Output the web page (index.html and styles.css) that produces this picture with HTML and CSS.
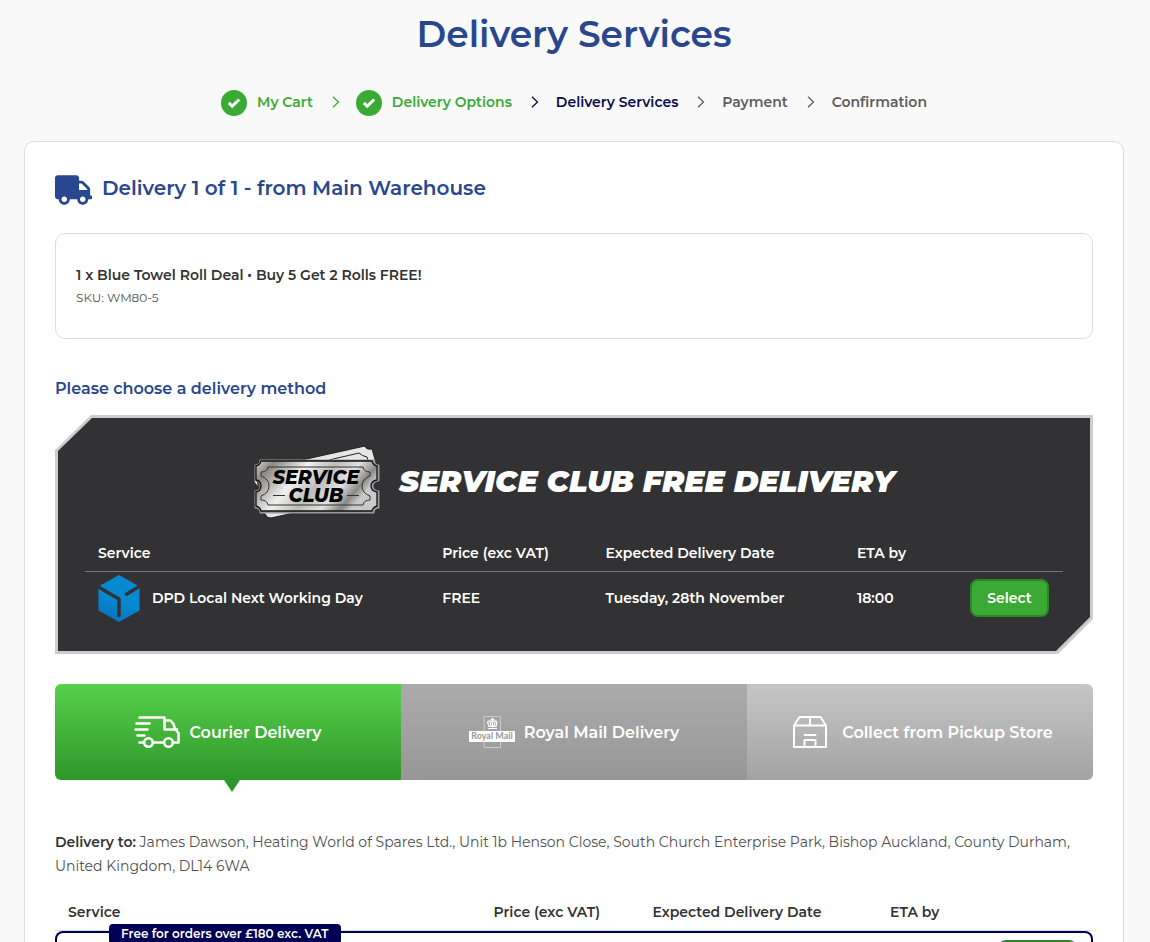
FILE: index.html
```html
<!DOCTYPE html>
<html lang="en">

<head>
    <meta charset="utf-8">
    <meta name="viewport" content="width=device-width, initial-scale=1.0">
    <title>Delivery Services</title>
    <link rel="stylesheet" href="styles.css">
</head>

<body>
<div class="page">
    <h1>Delivery Services</h1>

    <ol class="steps">
        <li class="done">
            <a href="#">
                <svg class="tick" viewBox="0 0 26 26"><circle cx="13" cy="13" r="13"/><path d="M7.8 12.8l3.4 3.3 7-6.6"/></svg>
                My Cart
            </a>
            <svg class="arrow" viewBox="0 0 8 12"><path d="M1 .7l5.5 5.3L1 11.3"/></svg>
        </li>
        <li class="done">
            <a href="#">
                <svg class="tick" viewBox="0 0 26 26"><circle cx="13" cy="13" r="13"/><path d="M7.8 12.8l3.4 3.3 7-6.6"/></svg>
                Delivery Options
            </a>
        </li>
        <li class="current">
            <svg class="arrow" viewBox="0 0 8 12"><path d="M1 .7l5.5 5.3L1 11.3"/></svg>
            Delivery Services
        </li>
        <li>
            <svg class="arrow" viewBox="0 0 8 12"><path d="M1 .7l5.5 5.3L1 11.3"/></svg>
            Payment
        </li>
        <li>
            <svg class="arrow" viewBox="0 0 8 12"><path d="M1 .7l5.5 5.3L1 11.3"/></svg>
            Confirmation
        </li>
    </ol>

    <div class="card">
        <h2>
            <svg class="truck" viewBox="0 0 640 512"><path d="M624 352h-16V243.9c0-12.7-5.1-24.9-14.1-33.9L494 110.1c-9-9-21.2-14.1-33.9-14.1H416V48c0-26.5-21.5-48-48-48H48C21.5 0 0 21.5 0 48v320c0 26.5 21.5 48 48 48h16c0 53 43 96 96 96s96-43 96-96h128c0 53 43 96 96 96s96-43 96-96h48c8.8 0 16-7.2 16-16v-32c0-8.8-7.2-16-16-16zM160 464c-26.5 0-48-21.5-48-48s21.5-48 48-48 48 21.5 48 48-21.5 48-48 48zm320 0c-26.5 0-48-21.5-48-48s21.5-48 48-48 48 21.5 48 48-21.5 48-48 48zm80-208H416V144h44.1l99.9 99.9V256z"/></svg>
            <span>Delivery 1 of 1 - from Main Warehouse</span>
        </h2>

        <div class="item">
            <div class="item-name">1 x Blue Towel Roll Deal • Buy 5 Get 2 Rolls FREE!</div>
            <div class="item-sku">SKU: WM80-5</div>
        </div>

        <h3>Please choose a delivery method</h3>

        <div class="club">
            <div class="club-inner">
                <div class="club-title">
                    <svg class="ticket" viewBox="0 0 128 74">
                        <defs>
                            <linearGradient id="silver" x1="0" y1="0" x2="1" y2=".35">
                                <stop offset="0" stop-color="#d2d2d2"/>
                                <stop offset=".14" stop-color="#8b8986"/>
                                <stop offset=".4" stop-color="#f0f0f0"/>
                                <stop offset=".6" stop-color="#bdbcb9"/>
                                <stop offset=".78" stop-color="#e2e2e2"/>
                                <stop offset=".92" stop-color="#8a8884"/>
                                <stop offset="1" stop-color="#c9c9c9"/>
                            </linearGradient>
                        </defs>
                        <g class="ticket-back">
                            <path d="M40 17L112 1q1 4 7 3l4 14-2 5H40z"/>
                            <path d="M76 15L106 8q3 3 8 4l2 7"/>
                            <path d="M4 56l3 11q5 0 7 5l4 1 36-8z"/>
                            <path d="M2 29l-1 8 4 5"/>
                        </g>
                        <path class="ticket-edge" d="M8 16H120q0 4 5 5V35q-6 1-6 6t6 6V62q-5 1-5 5H8q0-4-5-5V47q5-1 5-6t-5-6V21q5-1 5-5z"/>
                        <path class="ticket-front" fill="url(#silver)" d="M8 16H119q1 4 5 5V35q-6 1-6 6t6 6V61q-4 1-5 5H8q-1-4-5-5V47q5-1 5-6t-5-6V21q4-1 5-5z"/>
                        <path class="ticket-line" d="M15 22H110q1 5 7 5v4q-8 3-8 10t8 10v4q-6 0-7 5H15q-1-5-7-5v-4q8-3 8-10t-8-10v-4q6 0 7-5zM20 50.5H32M94 50.5H106"/>
                        <text x="63" y="39">SERVICE</text>
                        <text x="63" y="57">CLUB</text>
                    </svg>
                    <span>SERVICE CLUB FREE DELIVERY</span>
                </div>
                <table class="services">
                    <colgroup>
                        <col class="c-service"><col class="c-price"><col class="c-date"><col class="c-eta"><col>
                    </colgroup>
                    <thead>
                        <tr>
                            <th>Service</th>
                            <th>Price (exc VAT)</th>
                            <th>Expected Delivery Date</th>
                            <th>ETA by</th>
                            <th></th>
                        </tr>
                    </thead>
                    <tbody>
                        <tr>
                            <td>
                                <div class="carrier">
                                    <svg class="dpd" viewBox="0 0 42 48">
                                        <defs>
                                            <linearGradient id="dpdblue" x1=".6" y1="0" x2=".3" y2="1">
                                                <stop offset=".5" stop-color="#058ad2"/>
                                                <stop offset="1" stop-color="#0872b8"/>
                                            </linearGradient>
                                        </defs>
                                        <path fill="url(#dpdblue)" d="M21 1L41.5 12.500v24L21 48 .5 36.500V12.500z"/>
                                        <path class="dpd-line" d="M0 12.800L21 24.900V41.500M42 12L28.500 20.200"/>
                                    </svg>
                                    DPD Local Next Working Day
                                </div>
                            </td>
                            <td>FREE</td>
                            <td>Tuesday, 28th November</td>
                            <td>18:00</td>
                            <td class="action"><button type="button" class="select">Select</button></td>
                        </tr>
                    </tbody>
                </table>
            </div>
        </div>

        <div class="tabs">
            <button type="button" class="tab active">
                <svg class="tab-icon" viewBox="0 0 46 32">
                    <path d="M5.5 1.5H30.5V13.5H43M30.5 4.5H36.5L39.5 8 41 13 44.5 17V26.5H40M5.5 26.5H8.5M20 26.5H29M2.5 7.5H15.5M1.5 13.5H13.5M3.5 19.5H10.5"/>
                    <circle cx="14.5" cy="26.5" r="4.3"/><circle cx="34.5" cy="26.5" r="4.3"/>
                </svg>
                Courier Delivery
            </button>
            <button type="button" class="tab">
                <svg class="tab-icon" viewBox="0 0 46 32">
                    <path class="royal-frame" d="M15.5.5H31.5V31.5H15.5z"/>
                    <path class="royal-crown" d="M19.5 12.5h8M20 10.5L18.5 6q2-2.5 4.5 0 3-2.5 5 0l-1 4.500zM23.500 2v9M22 3.500h3M21 6l1 4M26 6l-1 4"/>
                    <path class="royal-plate" d="M0 15H46V26H0z"/>
                    <text x="23" y="23">Royal Mail</text>
                </svg>
                Royal Mail Delivery
            </button>
            <button type="button" class="tab light">
                <svg class="tab-icon store" viewBox="-6 0 46 32">
                    <path d="M1 9.5L6.5 1H27.5L33 9.5V31H1zM1 9.5H33M17 1V9.5M11.5 31V24H22.5V31M11.5 19H22.5"/>
                </svg>
                Collect from Pickup Store
            </button>
        </div>

        <p class="address"><b>Delivery to:</b> James Dawson, Heating World of Spares Ltd., Unit 1b Henson Close, South Church Enterprise Park, Bishop Auckland, County Durham, United Kingdom, DL14 6WA</p>

        <table class="services courier">
            <colgroup>
                <col class="c-service"><col class="c-price"><col class="c-date"><col class="c-eta"><col>
            </colgroup>
            <thead>
                <tr>
                    <th>Service</th>
                    <th>Price (exc VAT)</th>
                    <th>Expected Delivery Date</th>
                    <th>ETA by</th>
                    <th></th>
                </tr>
            </thead>
            <tbody>
                <tr>
                    <td colspan="4"><span class="badge">Free for orders over £180 exc. VAT</span></td>
                    <td class="action"><button type="button" class="select">Select</button></td>
                </tr>
            </tbody>
        </table>
    </div>
</div>
</body>
</html>
```
FILE: styles.css
```css
* {
    box-sizing: border-box;
}
body {
    margin: 0;
    font-family: Montserrat, Inter, sans-serif;
    font-size: 14px;
    color: #333;
    background: #f9f9f9;
}
.page {
    height: 100vh;
    overflow: hidden;
    padding: 12px 26px 0 24px;
}
h1, h2, h3, p, ol {
    margin: 0;
    padding: 0;
    font-weight: 600;
}
h1 {
    font-size: 36px;
    line-height: 44px;
    text-align: center;
    color: #29478e;
}

/* progress */
.steps {
    display: flex;
    justify-content: center;
    gap: 19px;
    margin: 34px 0 25px;
    list-style: none;
    font-weight: 600;
    line-height: 24px;
    color: #5c5c5c;
}
.steps li,
.steps a {
    display: flex;
    align-items: flex-start;
    gap: 17px;
    height: 26px;
}
.steps li.done {
    gap: 19px;
}
.steps li.done:first-child {
    margin-right: -3px;
}
.steps a {
    gap: 10px;
    color: inherit;
    text-decoration: none;
}
.steps .done {
    color: #3aaa35;
}
.steps .current {
    color: #0b0b4f;
}
.tick {
    width: 26px;
    height: 26px;
    fill: #3aaa35;
}
.tick path {
    fill: none;
    stroke: #fff;
    stroke-width: 3;
}
.arrow {
    width: 8px;
    height: 12px;
    margin-top: 6px;
    fill: none;
    stroke: currentColor;
    stroke-width: 1.3;
}

.card {
    padding: 32px 30px;
    border: 1px solid #ddd;
    border-radius: 10px;
    background: #fff;
}
h2 {
    display: flex;
    align-items: flex-start;
    gap: 10px;
    font-size: 20px;
    line-height: 28px;
    color: #29478e;
}
.truck {
    width: 37px;
    height: 30px;
    margin-top: 1px;
    fill: #29478e;
}
.item {
    margin-top: 28px;
    padding: 29px 20px;
    border: 1px solid #ddd;
    border-radius: 10px;
}
.item-name {
    font-weight: 600;
    line-height: 24px;
}
.item-sku {
    font-size: 12px;
    line-height: 22px;
    color: #505050;
}
h3 {
    margin: 38px 0 14px;
    font-size: 16px;
    line-height: 24px;
    color: #29478e;
}

/* service club */
.club {
    padding: 3px;
    background: #ccc;
    clip-path: polygon(36px 0, 100% 0, 100% calc(100% - 35px), calc(100% - 35px) 100%, 0 100%, 0 35px);
}
.club-inner {
    padding: 27px;
    background: #323234;
    color: #fff;
    clip-path: polygon(34px 0, 100% 0, 100% calc(100% - 34px), calc(100% - 34px) 100%, 0 100%, 0 33px);
}
.club-title {
    display: flex;
    align-items: center;
    justify-content: center;
    gap: 18px;
    margin-bottom: 16px;
    font-size: 30px;
    font-style: italic;
    font-weight: 900;
    line-height: 40px;
}
.ticket {
    width: 128px;
    height: 74px;
}
.ticket-back {
    fill: #e6e6e6;
    stroke: #222;
    stroke-width: 1;
}
.ticket-edge {
    fill: none;
    stroke: #999;
    stroke-width: 3;
}
.ticket-front {
    stroke: #111;
    stroke-width: 1.3;
}
.ticket-line {
    fill: none;
    stroke: #333;
    stroke-width: 1;
}
.ticket text {
    font-size: 19px;
    font-weight: 800;
    text-anchor: middle;
}

.services {
    width: 100%;
    table-layout: fixed;
    border-collapse: separate;
    border-spacing: 0;
    font-weight: 600;
}
.services th {
    height: 37px;
    padding: 0 13px;
    border-bottom: 1px solid #777;
    font-weight: 600;
    text-align: left;
}
.services td {
    height: 52px;
    padding: 0 13px;
}
.c-service { width: 35.2%; }
.c-price { width: 16.7%; }
.c-date { width: 25.7%; }
.c-eta { width: 11.2%; }
.carrier {
    display: flex;
    align-items: center;
    gap: 12px;
}
.dpd {
    width: 42px;
    height: 48px;
}
.dpd-line {
    fill: none;
    stroke: #323234;
    stroke-width: 3.5;
    stroke-linecap: round;
    stroke-linejoin: round;
}
.services .action {
    padding-right: 14px;
    text-align: right;
}
.select {
    width: 79px;
    height: 38px;
    padding: 0;
    border: 2px solid #2d862a;
    border-radius: 8px;
    background: #3aaa35;
    color: #fff;
    font: inherit;
}

/* delivery type tabs */
.tabs {
    display: grid;
    grid-template-columns: repeat(3, 1fr);
    margin-top: 30px;
}
.tab {
    position: relative;
    display: flex;
    align-items: center;
    justify-content: center;
    gap: 9px;
    height: 96px;
    padding: 0;
    border: 0;
    background: linear-gradient(#ababab, #979797);
    color: #fff;
    font: inherit;
    font-size: 16px;
    font-weight: 600;
}
.tab.active {
    border-radius: 6px 0 0 6px;
    background: linear-gradient(#57d04b, #2f972a);
}
.tab.active::after {
    content: "";
    position: absolute;
    top: 100%;
    left: 50%;
    margin-left: -4px;
    border: 8px solid transparent;
    border-top: 12px solid #2f972a;
    border-bottom: 0;
}
.tab.light {
    border-radius: 0 6px 6px 0;
    background: linear-gradient(#c6c6c6, #a3a3a3);
}
.tab-icon {
    width: 46px;
    height: 32px;
    fill: none;
    stroke: #fff;
    stroke-width: 2.6;
    stroke-linecap: round;
    stroke-linejoin: round;
}
.store {
    stroke-width: 2;
}
.royal-frame {
    stroke: #ccc;
    stroke-width: 1;
}
.royal-crown {
    stroke-width: 1.2;
}
.royal-plate {
    fill: #fff;
    stroke: none;
}
.royal-plate + text {
    fill: #999;
    stroke: none;
    font-family: Lato, sans-serif;
    font-size: 9px;
    font-weight: 700;
    text-anchor: middle;
}

.address {
    margin: 50px 0 16px;
    font-weight: 400;
    line-height: 24px;
    color: #505050;
}
.address b {
    font-weight: 600;
    color: #333;
}

.courier th {
    border-bottom-color: #ddd;
}
.courier td {
    position: relative;
    height: 70px;
    border: solid #000055;
    border-width: 2px 0;
}
.courier td:first-child {
    border-left-width: 2px;
    border-radius: 8px 0 0 8px;
}
.courier td:last-child {
    border-right-width: 2px;
    border-radius: 0 8px 8px 0;
    padding: 7px 14px 0;
    vertical-align: top;
}
.courier .c-service { width: 41%; }
.courier .c-price { width: 15.3%; }
.courier .c-date { width: 22.9%; }
.courier .c-eta { width: 9%; }
.badge {
    position: absolute;
    top: -9px;
    left: 52px;
    padding: 0 12px;
    border-radius: 4px;
    background: #000055;
    color: #fff;
    font-size: 12px;
    line-height: 20px;
}
```
